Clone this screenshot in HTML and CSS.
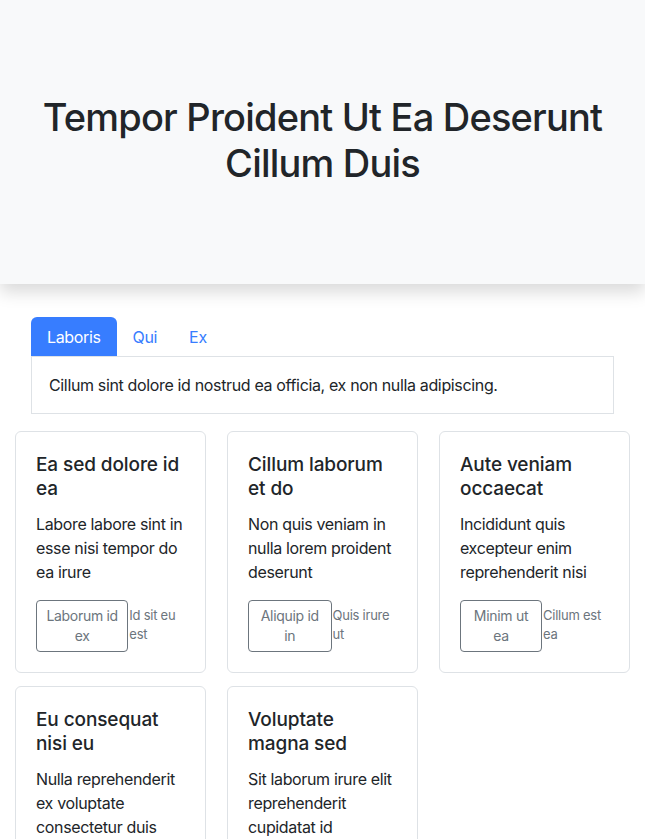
FILE: index.html
```html
<!DOCTYPE html>
<html lang="en">
<head>
<meta charset="utf-8">
<title>Tempor Proident</title>
<link rel="stylesheet" href="styles.css">
</head>
<body>
<header class="hero">
  <h1 class="hero-title">Tempor Proident Ut Ea Deserunt Cillum Duis</h1>
</header>
<section class="tabs">
  <nav class="tab-nav">
    <a class="tab active">Laboris</a>
    <a class="tab">Qui</a>
    <a class="tab">Ex</a>
  </nav>
  <div class="tab-content">Cillum sint dolore id nostrud ea officia, ex non nulla adipiscing.</div>
</section>
<section class="cards">
  <div class="card">
    <h5 class="card-title">Ea sed dolore id ea</h5>
    <p class="card-text">Labore labore sint in esse nisi tempor do ea irure</p>
    <div class="card-actions">
      <button class="btn">Laborum id ex</button>
      <small class="note">Id sit eu est</small>
    </div>
  </div>
  <div class="card">
    <h5 class="card-title">Cillum laborum et do</h5>
    <p class="card-text">Non quis veniam in nulla lorem proident deserunt</p>
    <div class="card-actions">
      <button class="btn">Aliquip id in</button>
      <small class="note">Quis irure ut</small>
    </div>
  </div>
  <div class="card">
    <h5 class="card-title">Aute veniam occaecat</h5>
    <p class="card-text">Incididunt quis excepteur enim reprehenderit nisi</p>
    <div class="card-actions">
      <button class="btn">Minim ut ea</button>
      <small class="note">Cillum est ea</small>
    </div>
  </div>
  <div class="card">
    <h5 class="card-title">Eu consequat nisi eu</h5>
    <p class="card-text">Nulla reprehenderit ex voluptate consectetur duis</p>
    <div class="card-actions">
      <button class="btn">Dolor sit</button>
      <small class="note">Magna est</small>
    </div>
  </div>
  <div class="card">
    <h5 class="card-title">Voluptate magna sed</h5>
    <p class="card-text">Sit laborum irure elit reprehenderit cupidatat id</p>
    <div class="card-actions">
      <button class="btn">Irure ad</button>
      <small class="note">Sunt ea</small>
    </div>
  </div>
</section>
</body>
</html>
```
FILE: styles.css
```css
* { box-sizing: border-box; }
html, body { margin: 0; padding: 0; }
body {
  font-family: Inter, "Liberation Sans", sans-serif;
  font-size: 16px;
  line-height: 24px;
  letter-spacing: -0.35px;
  color: #212529;
  background: #fff;
}
.hero {
  height: 284px;
  background: #f8f9fa;
  display: flex;
  align-items: center;
  justify-content: center;
  padding: 0 30px 4px;
  box-shadow: 0 8px 16px rgba(0,0,0,0.15);
  position: relative;
}
.hero-title {
  margin: 0;
  font-size: 38px;
  line-height: 46px;
  font-weight: 500;
  text-align: center;
  letter-spacing: -0.8px;
}
.tabs {
  margin: 33px 31px 0 31px;
}
.tab-nav {
  display: flex;
}
.tab {
  display: block;
  padding: 8px 16px 7px;
  color: #377dff;
  border-radius: 6px 6px 0 0;
  text-decoration: none;
}
.tab.active {
  background: #377dff;
  color: #fff;
}
.tab-content {
  border: 1px solid #dee2e6;
  padding: 16px 17px;
  font-size: 16px;
}
.cards {
  display: grid;
  grid-template-columns: repeat(3, 1fr);
  column-gap: 21px;
  row-gap: 13px;
  padding: 0 15px;
  margin-top: 17px;
}
.card {
  border: 1px solid #dee2e6;
  border-radius: 6px;
  padding: 20px;
}
.card-title {
  margin: 0 0 11px;
  padding-top: 1px;
  font-size: 19px;
  line-height: 24px;
  font-weight: 500;
  letter-spacing: -0.1px;
}
.card-text {
  margin: 0 0 16px;
  font-size: 16px;
  line-height: 24px;
}
.card-actions {
  display: flex;
  align-items: flex-start;
}
.btn {
  font-family: inherit;
  font-size: 14px;
  line-height: 20px;
  letter-spacing: -0.3px;
  color: #6c757d;
  background: transparent;
  border: 1px solid #6c757d;
  border-radius: 4px;
  padding: 5px 8px;
  text-align: center;
}
.note {
  font-size: 13px;
  line-height: 19px;
  letter-spacing: -0.25px;
  color: #6c757d;
  padding-top: 6px;
  padding-left: 1px;
}
```
